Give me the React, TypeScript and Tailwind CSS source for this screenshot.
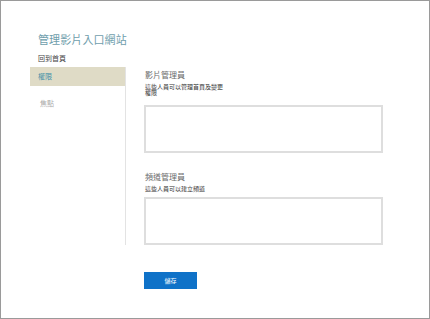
const font = { fontFamily: '"Noto Sans CJK TC", "Noto Sans", sans-serif' }

type SectionProps = {
  title: string;
  desc: string;
  gap: string;
}

const RoleSection = ({ title, desc, gap }: SectionProps) => (
  <div className="flex flex-col">
    <h2 className="text-[8px] leading-[10px] text-[#6b6b6b] pl-[1px]">{title}</h2>
    <p className={`text-[6px] leading-[5.5px] text-[#333333] w-[80px] pl-[1px] mt-[4px] ${gap}`}>{desc}</p>
    <div className="w-[239px] h-[48px] border-2 border-[#dedede] bg-white" />
  </div>
)

export default function App() {
  return (
    <div style={font} className="w-[430px] h-[319px] border border-[#9a9a9a] bg-white pl-[29px] flex flex-col">
      <h1 className="text-[11px] leading-[14px] text-[#6f9eac] pl-[8px] mt-[31px] tracking-[0.1px]">管理影片入口網站</h1>
      <p className="text-[7px] leading-[8px] text-[#444444] pl-[8px] mt-[8px]">回到首頁</p>
      <div className="flex mt-[5px]">
        <div className="w-[96px] h-[178px] border-r border-[#e3e3e3] flex flex-col">
          <div className="h-[19px] bg-[#dfdbc6] flex items-center pl-[8px] text-[7px] text-[#3d8ea6]">權限</div>
          <div className="mt-[13px] pl-[10px] text-[7px] leading-[9px] text-[#ababab]">焦點</div>
        </div>
        <div className="flex flex-col pl-[18px] pt-[3px]">
          <RoleSection title="影片管理員" desc="這些人員可以管理首頁及變更權限" gap="mb-[10px]" />
          <div className="mt-[19px]">
            <RoleSection title="頻道管理員" desc="這些人員可以建立頻道" gap="mb-[5px]" />
          </div>
          <button className="mt-[27px] w-[53px] h-[17px] bg-[#0f72c8] text-white text-[6px] flex items-center justify-center">儲存</button>
        </div>
      </div>
    </div>
  )
}
